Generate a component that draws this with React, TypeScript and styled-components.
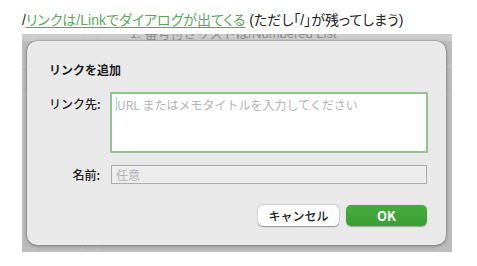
import React from "react";
import styled, { createGlobalStyle } from "styled-components";

const Global = createGlobalStyle`
  html, body { margin: 0; padding: 0; background: #ffffff; }
  body {
    font-family: "Liberation Sans", "Noto Sans CJK JP", sans-serif;
    color: #222;
    -webkit-font-smoothing: antialiased;
  }
`;

const Page = styled.div`
  width: 477px;
  height: 266px;
  overflow: hidden;
`;

const Caption = styled.p`
  margin: 0;
  padding: 10px 0 0 22px;
  font-size: 14px;
  line-height: 20px;
  color: #222;
  font-feature-settings: "palt";
  white-space: nowrap;
`;

const InlineLink = styled.a`
  color: #5aa858;
  text-decoration: underline;
  text-underline-offset: 2px;
`;

const Shot = styled.div`
  position: relative;
  overflow: hidden;
  margin: 4px 0 0 22px;
  width: 430px;
  height: 218px;
  box-sizing: border-box;
  padding: 7px 0 0 5px;
  background-color: #bdbdbd;
  background-image:
    linear-gradient(to right, transparent 60px, #c6c6c6 60px, #c6c6c6 61px, transparent 61px, transparent 75px, #c4c4c4 75px, #c4c4c4 76px, transparent 76px),
    linear-gradient(to bottom, #cdcdcd 0px, #cdcdcd 7px, transparent 7px),
    linear-gradient(to bottom, transparent 32px, #c7c7c7 32px, #c7c7c7 33px, transparent 33px, transparent 60px, #c7c7c7 60px, #c7c7c7 61px, transparent 61px);
`;

const BehindText = styled.div`
  position: absolute;
  left: 108px;
  top: -7px;
  font-size: 13px;
  line-height: 14px;
  color: #8d8d8d;
  white-space: nowrap;
  font-family: "Liberation Sans", "Noto Sans CJK JP", sans-serif;
`;

const Dialog = styled.div`
  position: relative;
  width: 419px;
  height: 204px;
  box-sizing: border-box;
  padding: 21px 19px 0 22px;
  background: #e9e9e9;
  border-radius: 10px;
  box-shadow: 0 1px 4px rgba(0, 0, 0, 0.35), 0 0 0 0.5px rgba(0, 0, 0, 0.15);
  font-family: "Noto Sans CJK JP", sans-serif;
`;

const Title = styled.div`
  font-size: 12px;
  line-height: 16px;
  font-weight: 700;
  color: #1e1e1e;
  margin-bottom: 14px;
`;

const Form = styled.div`
  display: grid;
  grid-template-columns: 51px 318px;
  column-gap: 10px;
  row-gap: 12px;
`;

const Label = styled.div<{ $pad: number }>`
  text-align: right;
  font-size: 12px;
  line-height: 16px;
  font-weight: 500;
  color: #222;
  padding-top: ${(p) => p.$pad}px;
  white-space: nowrap;
`;

const AreaWrap = styled.div`
  position: relative;
`;

const Area = styled.textarea`
  display: block;
  width: 318px;
  height: 61px;
  box-sizing: border-box;
  margin: 0;
  padding: 3px 5px;
  border: 2px solid #93c48d;
  border-radius: 1px;
  background: #ffffff;
  resize: none;
  outline: none;
  font-family: "Noto Sans CJK JP", sans-serif;
  font-size: 12px;
  line-height: 16px;
  color: #222;
  &::placeholder { color: #b4b4b4; }
`;

const Caret = styled.span`
  position: absolute;
  left: 6px;
  top: 5px;
  width: 1px;
  height: 14px;
  background: #9fd0ea;
`;

const Field = styled.input`
  display: block;
  width: 316px;
  height: 19px;
  box-sizing: border-box;
  margin-left: 1px;
  padding: 0 4px;
  border: 1px solid #ababab;
  border-radius: 0;
  background: #ececec;
  outline: none;
  font-family: "Noto Sans CJK JP", sans-serif;
  font-size: 12px;
  color: #222;
  &::placeholder { color: #b4b4b4; }
`;

const Actions = styled.div`
  display: flex;
  justify-content: flex-end;
  gap: 7px;
  margin-top: 21px;
`;

const Button = styled.button<{ $primary?: boolean }>`
  width: 81px;
  height: 21px;
  box-sizing: border-box;
  padding: 0;
  border: none;
  border-radius: 5px;
  font-family: "Noto Sans CJK JP", sans-serif;
  font-size: ${(p) => (p.$primary ? "13px" : "12px")};
  font-weight: ${(p) => (p.$primary ? 700 : 500)};
  line-height: 21px;
  color: ${(p) => (p.$primary ? "#ffffff" : "#222")};
  background: ${(p) =>
    p.$primary ? "linear-gradient(#47ad3f, #3a9f33)" : "#ffffff"};
  box-shadow: ${(p) =>
    p.$primary
      ? "0 0.5px 1px rgba(0,0,0,0.3)"
      : "0 0.5px 1.5px rgba(0,0,0,0.35), 0 0 0 0.5px rgba(0,0,0,0.08)"};
`;

export default function App() {
  return (
    <Page>
      <Global />
      <Caption>
        /<InlineLink>リンクは/Linkでダイアログが出てくる</InlineLink> (ただし「/」が残ってしまう)
      </Caption>
      <Shot>
        <BehindText>1. 番号付きリストは/Numbered List</BehindText>
        <Dialog>
          <Title>リンクを追加</Title>
          <Form>
            <Label $pad={4}>リンク先:</Label>
            <AreaWrap>
              <Area placeholder="URL またはメモタイトルを入力してください" />
              <Caret />
            </AreaWrap>
            <Label $pad={2}>名前:</Label>
            <Field placeholder="任意" />
          </Form>
          <Actions>
            <Button>キャンセル</Button>
            <Button $primary>OK</Button>
          </Actions>
        </Dialog>
      </Shot>
    </Page>
  );
}
